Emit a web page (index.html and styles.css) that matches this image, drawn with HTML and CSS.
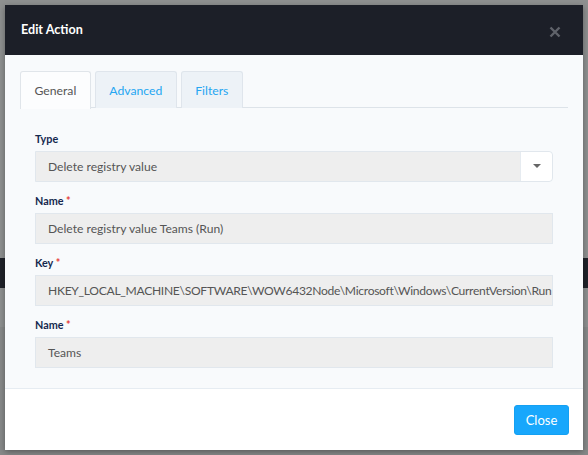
FILE: index.html
```html
<!DOCTYPE html>
<html>
<head>
<meta charset="utf-8">
<link rel="stylesheet" href="styles.css">
</head>
<body>
<div class="modal">
  <div class="modal-header">
    <h1 class="modal-title">Edit Action</h1>
    <button class="close-x" aria-label="Close">
      <svg width="12" height="12" viewBox="0 0 12 12"><path d="M1.5 1.5 L10.5 10.5 M10.5 1.5 L1.5 10.5" stroke="#5f626a" stroke-width="2.4" stroke-linecap="butt"/></svg>
    </button>
  </div>
  <div class="modal-body">
    <ul class="tabs">
      <li class="tab active">General</li>
      <li class="tab">Advanced</li>
      <li class="tab">Filters</li>
    </ul>
    <div class="tab-content">
      <div class="field">
        <label class="label">Type</label>
        <div class="select">
          <div class="select-value">Delete registry value</div>
          <div class="select-btn"><span class="caret"></span></div>
        </div>
      </div>
      <div class="field">
        <label class="label">Name <span class="req">*</span></label>
        <div class="input">Delete registry value Teams (Run)</div>
      </div>
      <div class="field">
        <label class="label">Key <span class="req">*</span></label>
        <div class="input input-key">HKEY_LOCAL_MACHINE\SOFTWARE\WOW6432Node\Microsoft\Windows\CurrentVersion\Run</div>
      </div>
      <div class="field">
        <label class="label">Name <span class="req">*</span></label>
        <div class="input">Teams</div>
      </div>
    </div>
  </div>
  <div class="modal-footer">
    <button class="btn-close">Close</button>
  </div>
</div>
</body>
</html>
```
FILE: styles.css
```css
* { box-sizing: border-box; }
html, body { margin: 0; padding: 0; }
body {
  width: 588px;
  height: 455px;
  overflow: hidden;
  font-family: "Lato", "Open Sans", sans-serif;
  background: linear-gradient(to bottom,
    #8e9090 0, #8e9090 258px,
    #1f2229 258px, #1f2229 288px,
    #8e9090 288px, #8e9090 327px,
    #878989 327px, #878989 100%);
  padding-top: 5px;
}
.modal {
  margin-left: 5px;
  width: 578px;
  height: 445px;
  background: #fff;
  display: flex;
  flex-direction: column;
  box-shadow: 0 2px 6px rgba(0,0,0,0.35);
}
.modal-header {
  height: 50px;
  background: #1c1f28;
  display: flex;
  align-items: center;
  justify-content: space-between;
  padding: 0 22px 0 16px;
  flex: none;
}
.modal-title {
  margin: 0;
  color: #fff;
  font-size: 12.6px;
  font-weight: 700;
  padding-bottom: 1px;
}
.close-x {
  background: none;
  border: 0;
  padding: 0;
  width: 12px;
  height: 12px;
  margin-top: 4px;
  display: flex;
}
.modal-body {
  background: #f8fafc;
  padding: 16px 15px 20px;
  border-bottom: 1px solid #e6ecf2;
  flex: none;
}
.tabs {
  list-style: none;
  margin: 0;
  padding: 0;
  display: flex;
  gap: 4px;
  border-bottom: 1px solid #dde3e9;
  height: 37px;
}
.tab {
  height: 37px;
  padding: 0 13.5px;
  display: flex;
  align-items: center;
  font-size: 12.2px;
  color: #25a6f2;
  background: #edf2f7;
  border: 1px solid #dfe5ec;
  border-bottom: 0;
  border-radius: 3px 3px 0 0;
}
.tab.active {
  color: #555;
  background: #fcfdfe;
  height: 38px;
  border-color: #e0e5ea;
}
.tab-content {
  padding: 23px 15px 0;
}
.field + .field { margin-top: 11px; }
.label {
  display: block;
  height: 16px;
  line-height: 16px;
  font-size: 10.8px;
  font-weight: 700;
  color: #15294f;
  margin-bottom: 4px;
}
.req { color: #e53935; }
.select {
  display: flex;
  height: 31px;
  border: 1px solid #e1e7ed;
  border-radius: 0 4px 4px 0;
}
.select-value {
  flex: 1;
  background: #eeeeee;
  font-size: 12.1px;
  color: #555;
  padding-left: 12px;
  display: flex;
  align-items: center;
}
.select-btn {
  width: 32px;
  background: #fff;
  border-left: 1px solid #e6ebf0;
  border-radius: 0 4px 4px 0;
  display: flex;
  align-items: center;
  justify-content: center;
}
.caret {
  width: 0;
  height: 0;
  border-left: 4px solid transparent;
  border-right: 4px solid transparent;
  border-top: 4px solid #666;
  margin-top: -1px;
}
.input {
  height: 31px;
  background: #eeeeee;
  border: 1px solid #e1e7ed;
  font-size: 12.1px;
  color: #555;
  padding: 0 12px;
  display: flex;
  align-items: center;
  white-space: nowrap;
  overflow: hidden;
}
.input-key {
  letter-spacing: -0.3px;
}
.modal-footer {
  flex: 1;
  background: #fff;
  display: flex;
  justify-content: flex-end;
  align-items: flex-start;
  padding: 16px 14px 0;
}
.btn-close {
  height: 30px;
  width: 55px;
  background: #18a7fc;
  border: 1px solid #14a0f2;
  border-radius: 3px;
  color: #fff;
  font-family: inherit;
  font-size: 13px;
  padding: 0;
}
```
